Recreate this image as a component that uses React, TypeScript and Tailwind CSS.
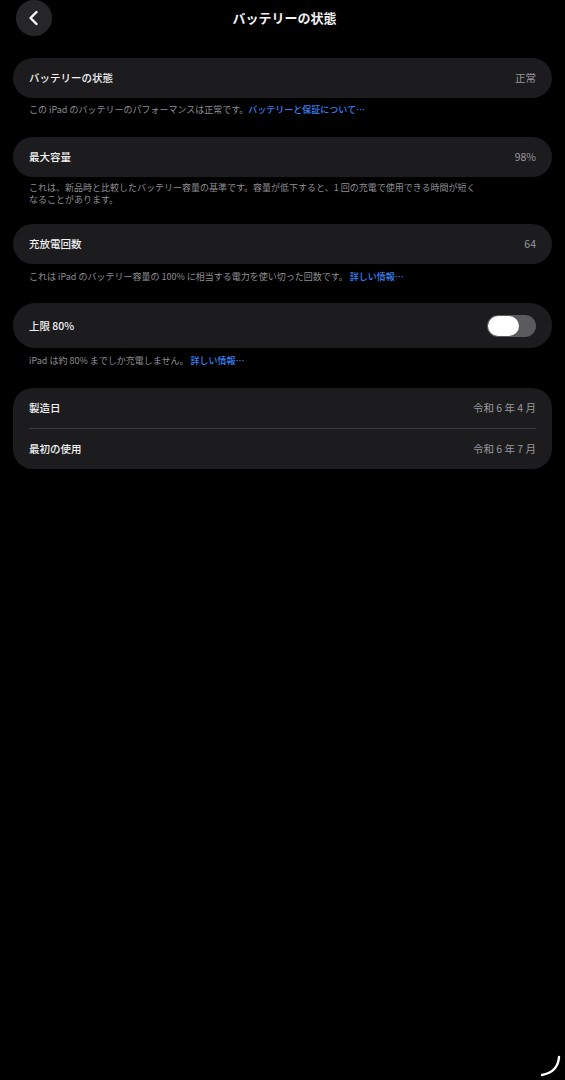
function Card({ children, className = '' }: { children: React.ReactNode; className?: string }) {
  return <div className={`bg-[#1c1c1e] ${className}`}>{children}</div>;
}

function Row({ label, value }: { label: string; value: string }) {
  return (
    <div className="h-10 flex items-center justify-between px-4">
      <span className="text-[10.5px] font-medium text-[#f2f2f4]">{label}</span>
      <span className="text-[10.5px] text-[#98989e]">{value}</span>
    </div>
  );
}

function Note({ children, className = '' }: { children: React.ReactNode; className?: string }) {
  return <p className={`px-4 text-[9px] leading-[12px] text-[#8e8e93] ${className}`}>{children}</p>;
}

function Link({ children }: { children: React.ReactNode }) {
  return <span className="text-[#3a83f7] font-medium">{children}</span>;
}

function App() {
  return (
    <div
      className="min-h-screen bg-black relative text-white"
      style={{ fontFamily: '"Noto Sans CJK JP", "Noto Sans", sans-serif' }}
    >
      <header className="h-9 relative flex items-center justify-center">
        <button className="absolute left-4 top-0 w-9 h-9 rounded-full bg-[#262628] flex items-center justify-center">
          <svg width="36" height="36" viewBox="0 0 36 36" fill="none">
            <path d="M20.5 12 L14.5 18 L20.5 24" stroke="#ffffff" strokeWidth="2.4" strokeLinecap="round" strokeLinejoin="round" />
          </svg>
        </button>
        <h1 className="text-[13px] font-bold text-[#f2f2f4] pl-1">バッテリーの状態</h1>
      </header>

      <main className="px-[13px] pt-[22px]">
        <Card className="rounded-[20px]">
          <Row label="バッテリーの状態" value="正常" />
        </Card>
        <Note className="mt-[6px] mb-[21px]">
          この iPad のバッテリーのパフォーマンスは正常です。<Link>バッテリーと保証について…</Link>
        </Note>

        <Card className="rounded-[20px]">
          <Row label="最大容量" value="98%" />
        </Card>
        <Note className="mt-[5px] mb-[18px] leading-[11.5px]">
          これは、新品時と比較したバッテリー容量の基準です。容量が低下すると、1 回の充電で使用できる時間が短く
          <br />
          なることがあります。
        </Note>

        <Card className="rounded-[20px]">
          <Row label="充放電回数" value="64" />
        </Card>
        <Note className="mt-[7px] mb-[20px]">
          これは iPad のバッテリー容量の 100% に相当する電力を使い切った回数です。 <Link>詳しい情報…</Link>
        </Note>

        <Card className="rounded-[22px]">
          <div className="h-[45px] flex items-center justify-between px-4">
            <span className="text-[10.5px] font-medium text-[#f2f2f4]">上限 80%</span>
            <div className="w-[49px] h-[22px] rounded-full bg-[#5a5a5f] flex items-center p-[1px]">
              <div className="w-[31px] h-[20px] rounded-full bg-white" />
            </div>
          </div>
        </Card>
        <Note className="mt-[7px] mb-[21px]">
          iPad は約 80% までしか充電しません。 <Link>詳しい情報…</Link>
        </Note>

        <Card className="rounded-[20px]">
          <Row label="製造日" value="令和 6 年 4 月" />
          <div className="mx-4 h-px bg-[#3a3a3c]" />
          <Row label="最初の使用" value="令和 6 年 7 月" />
        </Card>
      </main>

      <svg className="absolute left-[538px] top-[1053px]" width="25" height="25" viewBox="0 0 25 25" fill="none">
        <path d="M21 4 Q20 19 4 22" stroke="#ffffff" strokeWidth="2.4" strokeLinecap="round" />
      </svg>
    </div>
  );
}

export default App;
